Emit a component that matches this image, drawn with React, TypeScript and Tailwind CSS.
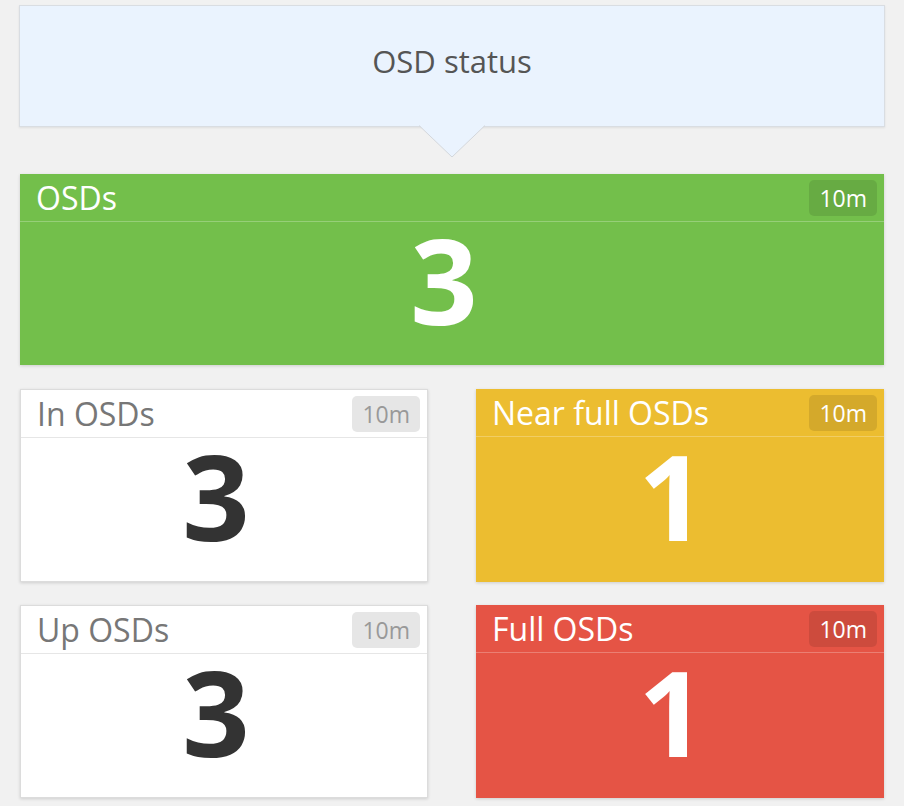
import React from 'react';

type Tile = {
  title: string;
  value: number;
  tone: 'green' | 'white' | 'yellow' | 'red';
};

const tones = {
  green: {
    box: 'bg-[#73bf4b] text-white',
    head: 'border-b border-white/25',
    badge: 'bg-black/10 text-white',
    value: 'text-white',
  },
  yellow: {
    box: 'bg-[#ecbd30] text-white',
    head: 'border-b border-white/25',
    badge: 'bg-black/10 text-white',
    value: 'text-white',
  },
  red: {
    box: 'bg-[#e55445] text-white',
    head: 'border-b border-white/25',
    badge: 'bg-black/10 text-white',
    value: 'text-white',
  },
  white: {
    box: 'bg-white text-[#777] border border-[#dcdcdc]',
    head: 'border-b border-[#e6e6e6]',
    badge: 'bg-[#e6e6e6] text-[#999]',
    value: 'text-[#333]',
  },
};

const StatTile: React.FC<Tile & { height?: string }> = ({ title, value, tone, height = 'h-[193px]' }) => {
  const t = tones[tone];
  return (
    <div className={`flex flex-col ${height} ${t.box} shadow-[0_1px_3px_rgba(0,0,0,0.15)]`}>
      <div className={`flex h-12 shrink-0 items-center justify-between pl-4 pr-[7px] ${t.head}`}>
        <span className="text-[32px] leading-[40px]">{title}</span>
        <span className={`rounded-[5px] px-[10px] py-[5px] text-[23px] leading-[26px] ${t.badge}`}>10m</span>
      </div>
      <div className="flex flex-1 items-center justify-center pb-7 pr-4">
        <span className={`text-[118px] font-bold leading-[100px] ${t.value}`}>{value}</span>
      </div>
    </div>
  );
};

export default function App() {
  const tiles: Tile[] = [
    { title: 'In OSDs', value: 3, tone: 'white' },
    { title: 'Near full OSDs', value: 1, tone: 'yellow' },
    { title: 'Up OSDs', value: 3, tone: 'white' },
    { title: 'Full OSDs', value: 1, tone: 'red' },
  ];

  return (
    <div className="min-h-screen bg-[#f1f1f1] px-5 pt-[5px] font-['Open_Sans',sans-serif]">
      {/* Group header with pointer */}
      <div className="relative -mx-px flex h-[122px] items-center justify-center border border-[#d9dde2] bg-[#eaf3fe] shadow-[0_1px_2px_rgba(0,0,0,0.08)]">
        <span className="pb-[10px] text-[31px] text-[#555]">OSD status</span>
        <svg
          className="absolute left-1/2 top-full -mt-px -translate-x-1/2"
          width="66"
          height="33"
          viewBox="0 0 66 33"
        >
          <polygon points="0,0 33,32 66,0" fill="#eaf3fe" />
          <polyline points="0,0.5 33,32 66,0.5" fill="none" stroke="#d3d7dc" strokeWidth="1" />
        </svg>
      </div>

      <div className="mt-[47px]">
        <StatTile title="OSDs" value={3} tone="green" height="h-[191px]" />
      </div>

      <div className="mt-6 grid grid-cols-2 gap-x-12 gap-y-[23px]">
        {tiles.map((tile) => (
          <StatTile key={tile.title} {...tile} />
        ))}
      </div>
    </div>
  );
}
